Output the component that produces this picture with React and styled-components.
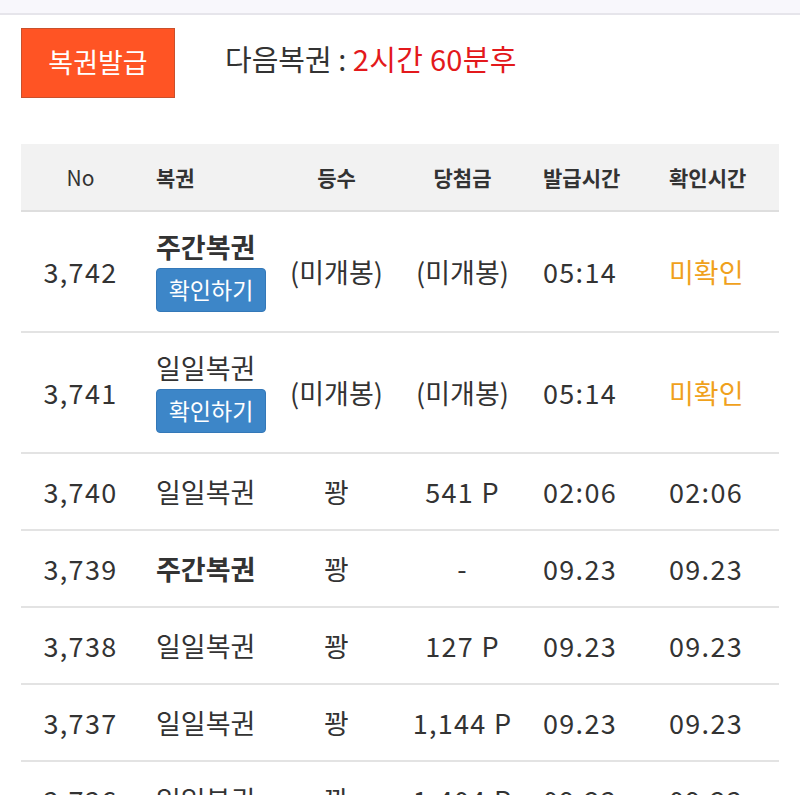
import React from "react";
import styled, { createGlobalStyle } from "styled-components";

const GlobalStyle = createGlobalStyle`
  body {
    margin: 0;
    background: #fff;
    font-family: "Noto Sans CJK KR", "Noto Sans", sans-serif;
    color: #333;
  }
`;

const rows = [
  { no: "3,742", name: "주간복권", weekly: true, open: false, rank: "(미개봉)", prize: "(미개봉)", issued: "05:14", checked: "미확인" },
  { no: "3,741", name: "일일복권", open: false, rank: "(미개봉)", prize: "(미개봉)", issued: "05:14", checked: "미확인" },
  { no: "3,740", name: "일일복권", open: true, rank: "꽝", prize: "541 P", issued: "02:06", checked: "02:06" },
  { no: "3,739", name: "주간복권", weekly: true, open: true, rank: "꽝", prize: "-", issued: "09.23", checked: "09.23" },
  { no: "3,738", name: "일일복권", open: true, rank: "꽝", prize: "127 P", issued: "09.23", checked: "09.23" },
  { no: "3,737", name: "일일복권", open: true, rank: "꽝", prize: "1,144 P", issued: "09.23", checked: "09.23" },
  { no: "3,736", name: "일일복권", open: true, rank: "꽝", prize: "1,404 P", issued: "09.23", checked: "09.23" },
];

function App() {
  return (
    <>
      <GlobalStyle />
      <Page>
        <TopStrip />
        <Toolbar>
          <IssueButton>복권발급</IssueButton>
          <NextInfo>
            다음복권 : <Remain>2시간 60분후</Remain>
          </NextInfo>
        </Toolbar>
        <Table>
          <HeadRow>
            <Cell align="center" light>No</Cell>
            <Cell align="left" pad="16px">복권</Cell>
            <Cell align="center">등수</Cell>
            <Cell align="center">당첨금</Cell>
            <Cell align="left" pad="8px">발급시간</Cell>
            <Cell align="left" pad="8px">확인시간</Cell>
          </HeadRow>
          {rows.map((r) => (
            <BodyRow key={r.no} tall={!r.open}>
              <Cell align="center" num>{r.no}</Cell>
              <Cell align="left" pad="16px">
                <NameBox>
                  <Name weekly={r.weekly}>{r.name}</Name>
                  {!r.open && <CheckButton>확인하기</CheckButton>}
                </NameBox>
              </Cell>
              <Cell align="center">{r.rank}</Cell>
              <Cell align="center" num={r.open}>{r.prize}</Cell>
              <Cell align="left" pad="8px" num>{r.issued}</Cell>
              <Cell align="left" pad="8px" num={r.open}>
                {r.open ? r.checked : <Unchecked>{r.checked}</Unchecked>}
              </Cell>
            </BodyRow>
          ))}
        </Table>
      </Page>
    </>
  );
}

const Page = styled.div`
  width: 800px;
  height: 795px;
  overflow: hidden;
`;

const TopStrip = styled.div`
  height: 13px;
  background: #f8f7fc;
  border-bottom: 2px solid #e6e5eb;
`;

const Toolbar = styled.div`
  display: flex;
  align-items: center;
  padding: 13px 21px 0;
  gap: 50px;
`;

const IssueButton = styled.button`
  width: 154px;
  height: 70px;
  background: #ff5424;
  border: 1px solid #c9502c;
  color: #fff;
  font-family: "Noto Sans CJK KR", sans-serif;
  font-size: 27px;
  padding: 0 0 4px;
`;

const NextInfo = styled.div`
  font-size: 29px;
  color: #333;
  margin-top: -10px;
`;

const Remain = styled.span`
  color: #e3191c;
  letter-spacing: 0.3px;
`;

const Table = styled.div`
  margin: 46px 21px 0;
`;

const HeadRow = styled.div`
  display: grid;
  grid-template-columns: 119px 143px 107px 145px 126px 118px;
  height: 66px;
  align-items: center;
  background: #f2f2f2;
  border-bottom: 2px solid #dedede;
  font-size: 21px;
  font-weight: 700;
`;

const BodyRow = styled.div`
  display: grid;
  grid-template-columns: 119px 143px 107px 145px 126px 118px;
  height: ${(p) => (p.tall ? "119px" : "75px")};
  align-items: center;
  border-bottom: 2px solid #e3e3e3;
  font-size: 27px;
`;

const Cell = styled.div`
  text-align: ${(p) => p.align};
  padding-left: ${(p) => p.pad || "0"};
  white-space: nowrap;
  font-weight: ${(p) => (p.light ? 400 : "inherit")};
  letter-spacing: ${(p) => (p.num ? "1.3px" : "0")};
`;

const NameBox = styled.div`
  display: flex;
  flex-direction: column;
  align-items: flex-start;
  gap: 5px;
`;

const Name = styled.span`
  font-weight: ${(p) => (p.weekly ? 700 : 400)};
  font-size: 27px;
  line-height: 32px;
`;

const CheckButton = styled.button`
  width: 110px;
  height: 44px;
  background: #3d86c8;
  border: 1px solid #3478b8;
  border-radius: 4px;
  color: #fff;
  font-family: "Noto Sans CJK KR", sans-serif;
  font-size: 23px;
  padding: 0 0 2px;
`;

const Unchecked = styled.span`
  color: #f0a11c;
`;

export default App;
